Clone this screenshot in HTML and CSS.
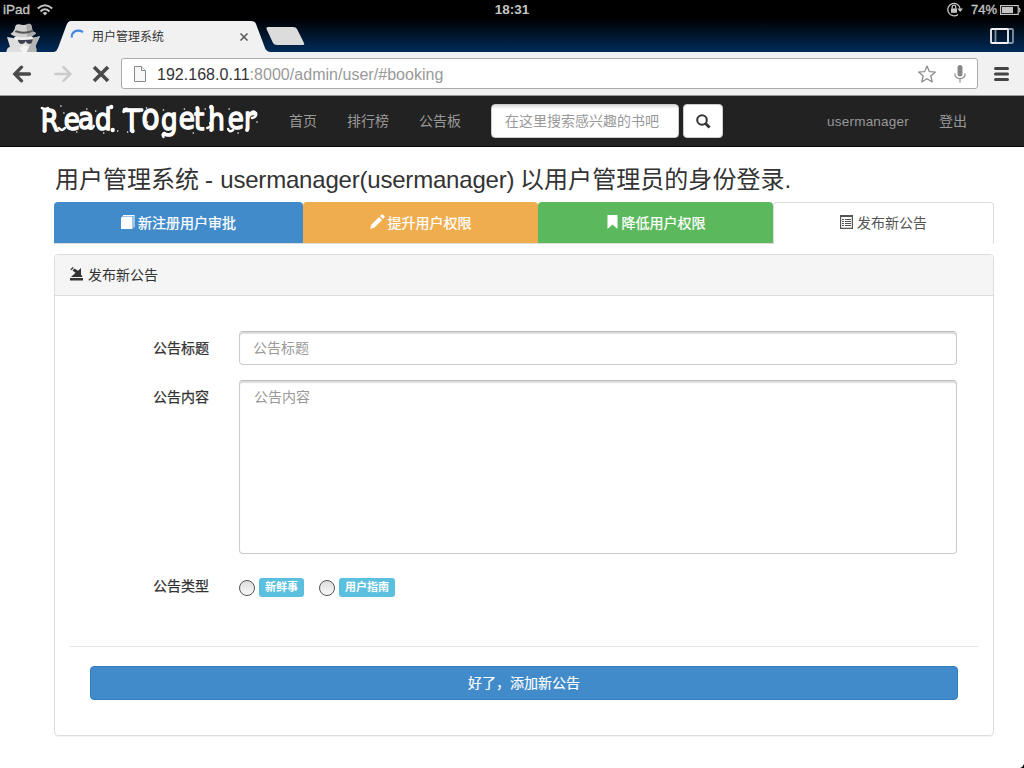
FILE: index.html
```html
<!DOCTYPE html>
<html lang="zh-CN">
<head>
<meta charset="utf-8">
<title>用户管理系统</title>
<link rel="stylesheet" href="styles.css">
</head>
<body>
<header class="chrome">
  <div class="status">
    <div class="status-left"><span class="device">iPad</span>
      <svg width="16" height="12" viewBox="0 0 16 12" fill="none" stroke="#c4c4c4" stroke-width="2"><path d="M.8 4.6Q8-2.2 15.2 4.6M3.5 7.4Q8 3.2 12.5 7.4"/><path d="M5.6 9Q8 7 10.4 9L8 11.6Z" fill="#c4c4c4" stroke="none"/></svg>
    </div>
    <div class="clock">18:31</div>
    <div class="status-right">
      <svg width="16" height="15" viewBox="0 0 16 15" fill="none" stroke="#c4c4c4" stroke-width="1.3"><path d="M11 12.4A6.2 6.2 0 1 1 13.2 7.2"/><path d="M10.3 6.6H16L13.2 10Z" fill="#c4c4c4" stroke="none"/><rect x="4" y="6.4" width="6" height="4.4" fill="#c4c4c4" stroke="none"/><path d="M5.2 6.5V5a1.8 1.8 0 0 1 3.6 0v1.5"/></svg>
      <span class="percent">74%</span>
      <svg width="21" height="10" viewBox="0 0 21 10"><rect x=".6" y=".6" width="17.6" height="8.8" fill="none" stroke="#c4c4c4" stroke-width="1.2"/><path d="M2 2h11v6H2z" fill="#c4c4c4"/><path d="M19 3q2 2 0 4" fill="none" stroke="#c4c4c4" stroke-width="1.2"/></svg>
    </div>
  </div>
  <div class="tabstrip">
    <svg class="spy" width="36" height="29" viewBox="15 69 108 87"><path d="M19 156Q20 143 30 140L21 111L44 115L48 107H94L99 113L120 109L106 139Q110 143 109 156Z" fill="#dedede"/><path d="M77 156L92 133L99 113L120 109L106 139Q110 143 109 156Z" fill="#b5b5b5"/><path d="M31 101Q43 97 46 78Q48 72 57 73Q72 78 87 71Q94 71 95 80L98 94L108 99Q105 108 82 110Q43 113 31 101Z" fill="#d0d0d0"/><path d="M79 73Q94 67 95 80L98 94L108 99Q105 107 82 110Z" fill="#aaa"/><path d="M44 96Q71 107 99 95L98 90Q70 100 48 91Z" fill="#555"/><path d="M42 110Q70 117 99 110L96 119H45Z" fill="#f1f1f1"/><path d="M54 119Q76 121 98 118Q98 132 87 132Q79 130 77 123Q74 132 64 132Q54 129 54 119Z" fill="#3c4150"/><path d="M58 145L72 134L87 141L80 156H67Z" fill="#f3f3f3"/></svg>
    <div class="tab">
      <svg class="tab-shape" width="216" height="31" viewBox="0 0 216 31"><path d="M0 31Q3 30 4 27L12.500 4Q14 0 17 0H197Q201 0 202 3L211 27Q212 30 216 31Z" fill="#f1f1f1"/></svg>
      <svg class="spinner" width="14" height="14" viewBox="0 0 14 14"><path d="M1.800 7.500C1.500 2.500 6 -1.500 13 2" fill="none" stroke="#4489dd" stroke-width="2.200"/></svg>
      <span class="tab-title">用户管理系统</span>
      <svg class="tab-close" width="8" height="8" viewBox="0 0 8 8"><path d="M.5 .5l7 7m0-7l-7 7" stroke="#555" stroke-width="1.500"/></svg>
    </div>
    <svg class="newtab" width="39" height="18" viewBox="0 0 39 18"><path d="M2 0H27Q30 0 31 2L38 16Q39 18 36 18H11Q8 18 7 16L.5 2Q0 0 2 0Z" fill="#dcdcdc"/></svg>
    <svg class="switcher" width="24" height="16" viewBox="0 0 24 16" fill="none" stroke-width="1.800"><rect x="5.500" y="1" width="17.500" height="14" rx="1" stroke="#8291a4"/><rect x="1" y="1" width="17" height="14" rx="1" stroke="#f2f2f2"/></svg>
  </div>
  <div class="toolbar">
    <svg width="20" height="18" viewBox="0 0 20 18" fill="none" stroke="#4a4a4a" stroke-width="3.300" stroke-linecap="round"><path d="M9.500 2.200L2.800 9l6.700 6.800M3.500 9h14"/></svg>
    <svg width="20" height="18" viewBox="0 0 20 18" fill="none" stroke="#cbcbcb" stroke-width="2.600" stroke-linecap="round"><path d="M10.500 2.200L17.200 9l-6.700 6.800M16.500 9H2.500"/></svg>
    <svg width="18" height="18" viewBox="0 0 18 18" stroke="#4a4a4a" stroke-width="3.600"><path d="M2 2l14 14M16 2L2 16"/></svg>
    <div class="omnibox">
      <svg width="12" height="16" viewBox="0 0 12 16" fill="#f8f8f8" stroke="#888"><path d="M.5.5H7.500L11.500 4.500V15.500H.5Z"/><path d="M7.500.5V4.500H11.500"/></svg>
      <span class="url"><span class="host">192.168.0.11</span>:8000/admin/user/#booking</span>
      <svg class="star" width="18" height="18" viewBox="0 0 18 18" fill="none" stroke="#888" stroke-width="1.200" stroke-linejoin="round"><path d="M9 1L11.300 6.600L17.300 7L12.800 11L14.300 17L9 13.800L3.700 17L5.200 11L.7 7L6.700 6.600Z"/></svg>
      <svg class="mic" width="12" height="18" viewBox="0 0 12 18" fill="none" stroke="#888" stroke-width="1.200"><rect x="3.500" y="0" width="5" height="11.500" rx="2.500" fill="#888" stroke="none"/><path d="M.8 8.500Q1 13.500 6 13.500T11.200 8.500M6 13.500V17.500"/></svg>
    </div>
    <svg class="menu" width="15" height="14" viewBox="0 0 15 14" stroke="#444" stroke-width="3" stroke-linecap="round"><path d="M1.500 1.500h12M1.500 7h12M1.500 12.500h12"/></svg>
  </div>
</header>

<nav class="navbar">
  <svg class="brand" width="220" height="48" viewBox="0 0 220 48" fill="#fff">
    <text class="brand-text" transform="scale(.85 1)" y="34 33 32 33 33 34 32 33 32 33 33 32 32" x="1 28 45 65 84 99 120 143 164 182 199 222 241">Read T<tspan class="brand-o">o</tspan>gether</text>
    <g fill="none" stroke="#fff" stroke-width="2.500" stroke-linecap="round"><path d="M2 11q3 2 6 0M54 29q-1 4-5 2M84 15q0-4 4-3M213 21q5-1 4-5q-3-3-5 0M125 36q-3 1-1 4M168 31q5-1 3-5M189 32q1 4 5 1M19 31q3 4 6 0"/></g>
    <g><circle cx="4.500" cy="34" r="2"/><circle cx="71.500" cy="10" r="2.200"/><circle cx="73" cy="33" r="2.200"/><circle cx="93" cy="34" r="2.200"/><circle cx="102" cy="13" r="2"/><circle cx="158" cy="11" r="2"/><circle cx="172" cy="10" r="2.200"/><circle cx="172" cy="33" r="2"/><circle cx="208" cy="33" r="2"/><circle cx="21" cy="9" r=".8"/><circle cx="24" cy="16" r=".8"/><circle cx="37" cy="35" r=".8"/><circle cx="47" cy="12" r=".8"/><circle cx="56" cy="14" r=".8"/><circle cx="64" cy="36" r=".8"/><circle cx="78" cy="34" r=".8"/><circle cx="88" cy="35" r=".8"/><circle cx="107" cy="11" r=".8"/><circle cx="108" cy="25" r=".8"/><circle cx="124" cy="13" r=".8"/><circle cx="145" cy="12" r=".8"/><circle cx="154" cy="36" r=".8"/><circle cx="166" cy="12" r=".8"/><circle cx="190" cy="12" r=".8"/><circle cx="199" cy="36" r=".8"/><circle cx="218" cy="25" r=".8"/></g>
  </svg>
  <a class="nav-link">首页</a><a class="nav-link">排行榜</a><a class="nav-link">公告板</a>
  <div class="search">在这里搜索感兴趣的书吧</div>
  <div class="search-btn"><svg width="15" height="15" viewBox="0 0 15 15" fill="none" stroke="#333"><circle cx="6" cy="6" r="4.800" stroke-width="2"/><path d="M9.300 9.300l4.300 4.300" stroke-width="2.800"/></svg></div>
  <a class="nav-user">usermanager</a><a class="nav-logout">登出</a>
</nav>

<main class="container">
  <h1 class="title"><span class="title-a">用户管理系统</span><span class="title-b">- usermanager(usermanager)</span><span class="title-c">以用户管理员的身份登录.</span></h1>
  <div class="tabs">
    <a class="pill blue"><svg width="14" height="14" viewBox="0 0 14 14" fill="#fff"><path d="M2 0H13.500V12.500H12.500V1H2ZM1.300 1.600H11.500V14H0V2.900Z"/></svg>新注册用户审批</a>
    <a class="pill orange"><svg width="15" height="15" viewBox="0 0 15 15" fill="#fff"><path d="M0 15L1.500 10.500L9 3L12 6L4.500 13.500ZM10 2L11.500.5Q12.300 0 13 .7L14.300 2Q15 2.700 14.500 3.500L13 5Z"/></svg>提升用户权限</a>
    <a class="pill green"><svg width="11" height="15" viewBox="0 0 11 15" fill="#fff"><path d="M.5 0H10.500V14L5.500 9.500L.5 14Z"/></svg>降低用户权限</a>
    <a class="pill active"><svg width="13" height="14" viewBox="0 0 13 14"><path d="M.6.6h11.800v12.800H.6z" fill="#fff" stroke="#555" stroke-width="1.200"/><path d="M0 0h13v2H0z" fill="#555"/><path d="M2 4.500h2m1 0h6M2 6.500h2m1 0h6M2 8.500h2m1 0h6M2 10.500h2m1 0h6" stroke="#555"/></svg>发布新公告</a>
  </div>
  <section class="panel">
    <div class="panel-heading"><svg width="14" height="14" viewBox="0 0 14 14" fill="#333"><path d="M0 11H13V13.500H0ZM1 10L3 8H11.500L12.500 10ZM11 1V8.300H3L5.500 5.800L2.500 3.500L4.500 1.500L8 3.800Z"/><path d="M.7 2.800L3.300 .5" stroke="#333" stroke-width="1.200"/></svg>发布新公告</div>
    <div class="panel-body">
      <div class="row"><label class="label">公告标题</label><div class="field">公告标题</div></div>
      <div class="row row-area"><label class="label">公告内容</label><div class="field area">公告内容</div></div>
      <div class="row row-type"><span class="label">公告类型</span>
        <div class="choices"><i class="radio"></i><b class="badge">新鲜事</b><i class="radio second"></i><b class="badge wide">用户指南</b></div>
      </div>
      <hr class="rule">
      <div class="submit">好了，添加新公告</div>
    </div>
  </section>
</main>
<svg class="corner" width="4" height="4" viewBox="0 0 4 4"><path d="M4 0V4H0Q3 3 4 0Z"/></svg>
</body>
</html>
```

FILE: styles.css
```css
* { box-sizing: border-box; }
body { margin: 0; width: 1024px; height: 768px; overflow: hidden; background: #fff; color: #333; font: 14px/20px "Liberation Sans", "Noto Sans CJK SC", sans-serif; }
svg { display: block; flex: none; }
.chrome { height: 96px; background: linear-gradient(#000 0, #000 18px, #002b59 52px); }
.status { height: 20px; padding-bottom: 1px; display: grid; grid-template-columns: 1fr 100px 1fr; align-items: center; color: #c4c4c4; font-size: 14px; font-weight: bold; line-height: 19px; }
.status-left, .status-right { display: flex; align-items: center; height: 19px; }
.status-left { padding-left: 3px; gap: 7px; }
.device { width: 27px; font-size: 13.5px; font-weight: normal; -webkit-text-stroke: .35px #c4c4c4; }
.device, .clock, .percent { line-height: 18px; }
.clock { text-align: center; font-size: 13.5px; }
.status-right { justify-content: flex-end; padding-right: 3px; }
.percent { width: 27px; margin: 0 2px 0 8px; font-size: 13px; font-weight: normal; -webkit-text-stroke: .35px #c4c4c4; }
.tabstrip { height: 32px; display: flex; align-items: flex-start; }
.spy { margin: 3px 0 0 5px; }
.tab { position: relative; width: 216px; height: 31px; margin: 1px 0 0 13px; display: flex; align-items: center; padding-left: 16px; }
.tab-shape { position: absolute; left: 0; top: 0; }
.spinner, .tab-title, .tab-close { position: relative; }
.spinner { overflow: visible; }
.tab-title { width: 148px; margin-left: 8px; font-size: 12px; line-height: 30px; color: #333; }
.tab-close { margin-top: 1px; }
.newtab { margin: 7px 0 0 -4px; }
.switcher { margin: 8px 10px 0 auto; }
.toolbar { height: 44px; background: #f1f1f1; border-bottom: 1px solid #999; display: flex; align-items: center; padding: 0 15px 0 12px; }
.toolbar > svg:nth-child(2) { margin-left: 21px; }
.toolbar > svg:nth-child(3) { margin: 0 11px 0 19px; }
.omnibox { width: 857px; height: 31px; background: #fff; border: 1px solid #aaa; border-radius: 3px; display: flex; align-items: center; padding: 0 11px 0 12px; }
.url { margin-left: 11px; font-size: 16px; letter-spacing: .03px; line-height: 30px; padding-top: 2px; color: #999; }
.host { color: #333; }
.star { margin-left: auto; margin-right: 18px; }
.menu { margin-left: auto; }
.navbar { height: 51px; background: #222; border-bottom: 1px solid #080808; display: flex; align-items: center; color: #999; }
.brand { margin-left: 40px; width: 219px; overflow: visible; }
.brand-text { font: 31px "DejaVu Sans", sans-serif; stroke: #fff; stroke-width: 1.5px; stroke-linejoin: round; }
.brand-o { font-size: 35px; }
.nav-link { margin-left: 30px; }
.search { margin-left: 30px; width: 188px; height: 34px; padding: 6px 13px; border: 1px solid #ccc; border-radius: 4px; background: linear-gradient(#ddd, #fff 4px); white-space: nowrap; color: #999; }
.search-btn { width: 40px; height: 34px; margin-left: 4px; padding-left: 1px; border: 1px solid #ccc; border-radius: 4px; background: #fff; display: flex; align-items: center; justify-content: center; }
.nav-user { margin-left: auto; padding-top: 1px; font-size: 13.5px; letter-spacing: .22px; }
.nav-logout { margin: 0 57px 0 30px; }
.container { width: 940px; margin: 0 0 0 54px; }
.title { margin: 0; padding: 19px 0 0 1px; height: 55px; display: flex; font-size: 24px; font-weight: normal; line-height: 27px; white-space: nowrap; }
.title-a { width: 150px; }
.title-b { width: 315px; letter-spacing: -.2px; word-spacing: 1px; }
.title-c { letter-spacing: .05px; }
.tabs { height: 42px; display: grid; grid-template-columns: 249px 235px 235px 221px; border-bottom: 1px solid #ddd; }
.pill { height: 41px; border-radius: 4px 4px 0 0; display: flex; align-items: center; justify-content: center; gap: 3px; color: #fff; -webkit-text-stroke: .25px; }
.pill svg { margin-top: -2px; }
.blue { background: #428bca; }
.orange { background: #f0ad4e; }
.green { background: #5cb85c; gap: 4px; padding-left: 1px; }
.green svg { margin-top: 0; }
.active { height: 42px; padding-bottom: 2px; gap: 4px; background: #fff; border: 1px solid #ddd; border-bottom: 0; color: #555; -webkit-text-stroke: 0; }
.panel { margin-top: 10px; height: 482px; border: 1px solid #ddd; border-radius: 4px; box-shadow: 0 1px 1px rgba(0,0,0,.05); }
.panel-heading { height: 41px; background: #f5f5f5; border-bottom: 1px solid #ddd; border-radius: 3px 3px 0 0; padding-left: 15px; display: flex; align-items: center; gap: 4px; }
.panel-heading svg { margin-top: -2px; }
.panel-body { padding: 35px 15px 0; }
.row { display: flex; }
.label { width: 139px; text-align: right; padding-top: 7px; -webkit-text-stroke: .25px #333; }
.field { width: 718px; height: 34px; margin-left: 30px; padding: 6px 13px; border: 1px solid #ccc; border-top-color: #bbb; border-radius: 4px; background: #fff; box-shadow: inset 0 2px 1px #ddd; color: #999; }
.row-area { margin-top: 15px; }
.area { height: 174px; padding-left: 14px; }
.row-type { margin-top: 15px; height: 34px; }
.choices { margin-left: 30px; display: flex; padding-top: 9px; }
.radio { width: 16px; height: 16px; margin-top: 2px; border: 1px solid #555; border-radius: 50%; background: linear-gradient(#ddd, #fafafa); }
.badge { width: 45px; height: 19px; margin-left: 4px; border-radius: 3px; background: #5bc0de; color: #fff; font-size: 11px; line-height: 19px; text-align: center; white-space: nowrap; }
.wide { width: 56px; }
.second { margin-left: 15px; }
.rule { margin: 43px 0 19px; border: 0; border-top: 1px solid #e5e5e5; }
.submit { height: 34px; margin: 0 20px; border: 1px solid #357ebd; border-radius: 4px; background: #428bca; color: #fff; text-align: center; line-height: 32px; -webkit-text-stroke: .15px; }
.corner { position: absolute; left: 1020px; top: 764px; }
```
